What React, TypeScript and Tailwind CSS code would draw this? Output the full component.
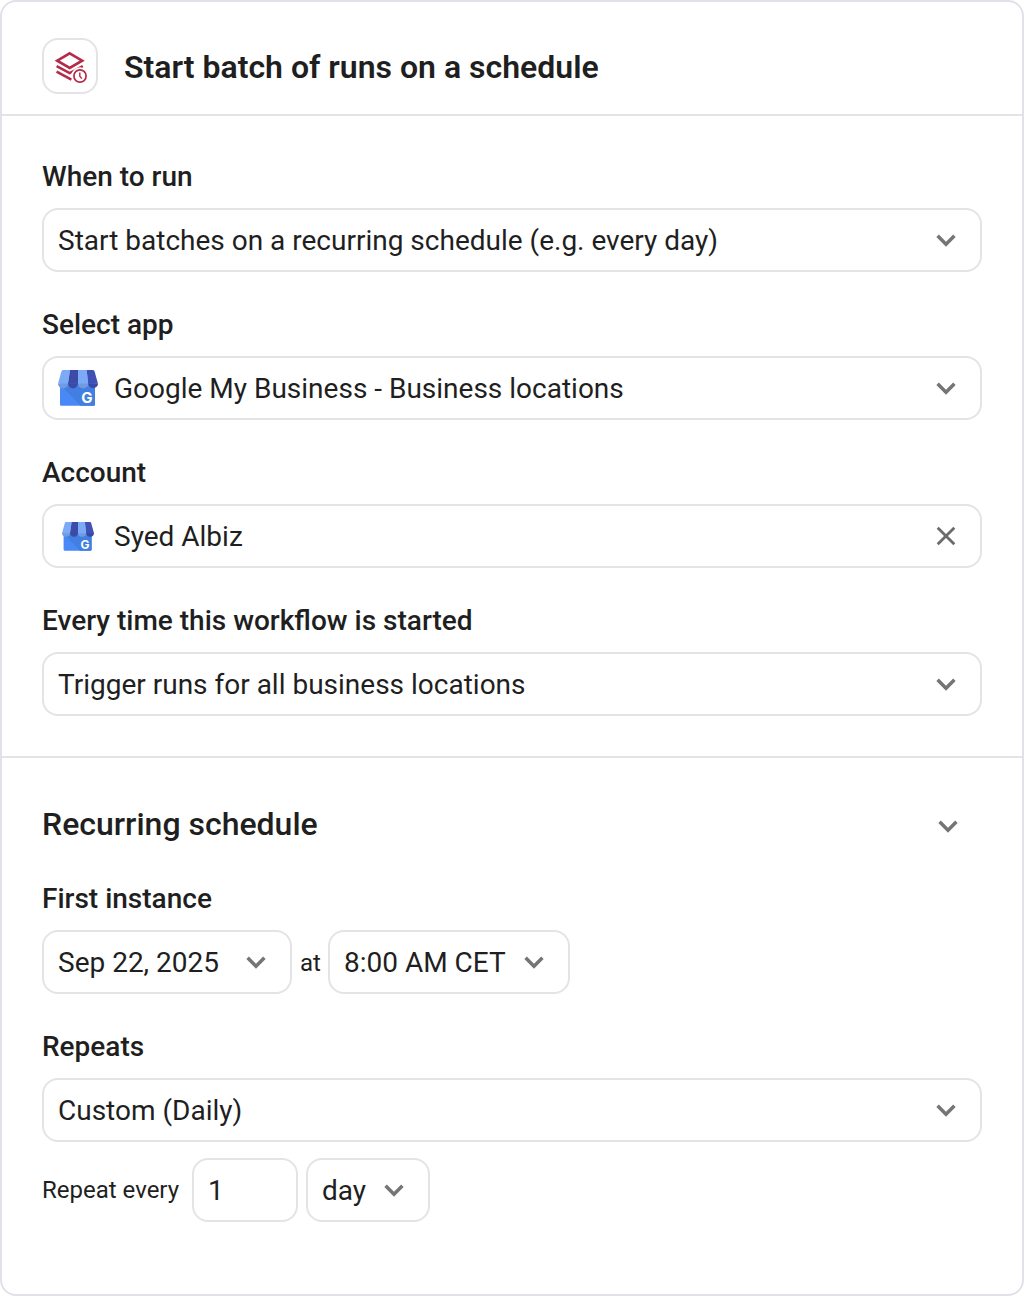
import { useState, type ReactNode } from 'react';

interface SelectBoxProps {
    id: string;
    label?: string;
    options: string[];
    icon?: ReactNode;
    className?: string;
}

function ChevronIcon() {
    return (
        <svg viewBox="0 0 24 24" className="h-6 w-6" fill="none" stroke="#757575" strokeWidth="3.5" aria-hidden="true">
            <path d="M3.6 7.8 12 16.2l8.4-8.4" />
        </svg>
    );
}

function CloseIcon() {
    return (
        <svg viewBox="0 0 24 24" className="h-6 w-6" fill="none" stroke="#6b6b6b" strokeWidth="2.8" aria-hidden="true">
            <path d="M3.7 3.7l16.6 16.6M20.3 3.7 3.7 20.3" />
        </svg>
    );
}

function BatchIcon() {
    return (
        <svg viewBox="0 0 32 32" className="h-8 w-8 overflow-visible" fill="none" stroke="#b42a48" aria-hidden="true">
            <path d="M2.6 21.6 17.4 29.6" strokeWidth="2.6" />
            <path d="M2.6 16.2 15.7 23 28.8 16.2" strokeWidth="2.5" />
            <path d="M15.7 3.3 28.2 10.7 15.7 17.9 3.2 10.7z" fill="#fff" strokeWidth="2.6" />
            <circle cx="26" cy="26" r="8.7" fill="#fff" stroke="none" />
            <circle cx="26" cy="26" r="6.1" strokeWidth="1.7" />
            <path d="M25.8 22.4v3.8l2.1 2.4" strokeWidth="1.4" />
        </svg>
    );
}

function BusinessIcon({ className }: { className: string }) {
    return (
        <svg viewBox="0 0 40 36" className={className} aria-hidden="true">
            <path d="M2 12h35v22.4c0 .8-.6 1.4-1.4 1.4H3.4c-.8 0-1.4-.6-1.4-1.4z" fill="#4989f5" />
            <path d="M4.5 17 22.5 35.8h13.1c.8 0 1.4-.6 1.4-1.4V17z" fill="#427fe0" />
            <path d="M0 13.4h10a5 5 0 0 1-10 0z" fill="#709be0" />
            <path d="M10 13.4h10a5 5 0 0 1-10 0z" fill="#3c4ba6" />
            <path d="M20 13.4h10.2a5 5 0 0 1-10.2 0z" fill="#709be0" />
            <path d="M30.2 13.4H40a4.9 4.9 0 0 1-9.8 0z" fill="#3a49a5" />
            <path d="M5.4 0H12L10 13.8H0L3.4 1.6C3.7.6 4.4 0 5.4 0z" fill="#7baaf7" />
            <path d="M12 0h8v13.8H10z" fill="#3c4aa8" />
            <path d="M20 0h8.6l1.6 13.8H20z" fill="#7baaf7" />
            <path d="M28.6 0h6c1 0 1.7.6 2 1.6L40 13.8h-9.8z" fill="#3f51b5" />
            <text x="23.2" y="33.2" fill="#fff" fontFamily="Inter, sans-serif" fontWeight="700" fontSize="15">
                G
            </text>
        </svg>
    );
}

function FieldLabel({ htmlFor, children }: { htmlFor: string; children: ReactNode }) {
    return (
        <label htmlFor={htmlFor} className="mb-2.5 block text-[28px] leading-[42px] font-medium">
            {children}
        </label>
    );
}

function SelectBox({ id, label, options, icon, className = 'w-full' }: SelectBoxProps) {
    return (
        <div className={`relative ${className}`}>
            {icon && <span className="pointer-events-none absolute inset-y-0 left-4 flex w-10 items-center justify-center">{icon}</span>}
            <select
                id={id}
                aria-label={label}
                className={`h-16 w-full appearance-none rounded-2xl border-2 border-[#e4e4e4] bg-white pt-0.5 pr-14 text-[28px] ${icon ? 'pl-[70px]' : 'pl-3.5'}`}
            >
                {options.map((option) => (
                    <option key={option}>{option}</option>
                ))}
            </select>
            <span className="pointer-events-none absolute inset-y-0 right-6 flex items-center">
                <ChevronIcon />
            </span>
        </div>
    );
}

export default function App() {
    const [account, setAccount] = useState('Syed Albiz');
    const [open, setOpen] = useState(true);

    return (
        <main className="rounded-2xl border-2 border-[#e2e1ea] bg-white font-[Roboto,sans-serif] text-[#1f1f1f]">
            {/* Header */}
            <header className="flex items-center gap-[26px] border-b-2 border-[#e4e4e4] px-10 pt-9 pb-5">
                <div className="flex h-14 w-14 shrink-0 items-center justify-center rounded-2xl border-2 border-[#e4e4e4]">
                    <BatchIcon />
                </div>
                <h1 className="pt-0.5 text-[32px] leading-10 font-semibold">Start batch of runs on a schedule</h1>
            </header>

            {/* Trigger settings */}
            <section className="flex flex-col gap-8 border-b-2 border-[#e4e4e4] p-10">
                <div>
                    <FieldLabel htmlFor="when">When to run</FieldLabel>
                    <SelectBox id="when" options={['Start batches on a recurring schedule (e.g. every day)']} />
                </div>
                <div>
                    <FieldLabel htmlFor="app">Select app</FieldLabel>
                    <SelectBox
                        id="app"
                        options={['Google My Business - Business locations']}
                        icon={<BusinessIcon className="h-9 w-10" />}
                    />
                </div>
                <div>
                    <FieldLabel htmlFor="account">Account</FieldLabel>
                    <div className="flex h-16 items-center rounded-2xl border-2 border-[#e4e4e4] pr-[22px] pl-3.5">
                        <span className="flex w-10 shrink-0 justify-center">
                            <BusinessIcon className="h-[29px] w-8" />
                        </span>
                        <input
                            id="account"
                            type="text"
                            value={account}
                            onChange={(e) => setAccount(e.target.value)}
                            className="min-w-0 flex-1 px-4 pt-0.5 text-[28px] outline-none"
                        />
                        <button type="button" aria-label="Clear account" onClick={() => setAccount('')}>
                            <CloseIcon />
                        </button>
                    </div>
                </div>
                <div>
                    <FieldLabel htmlFor="every">Every time this workflow is started</FieldLabel>
                    <SelectBox id="every" options={['Trigger runs for all business locations']} />
                </div>
            </section>

            {/* Recurring schedule */}
            <section className="px-10 pt-11 pb-[72px]">
                <div className="flex items-center justify-between pr-[22px]">
                    <h2 className="pt-0.5 text-[32px] leading-10 font-medium">Recurring schedule</h2>
                    <button
                        type="button"
                        aria-label="Toggle recurring schedule"
                        aria-expanded={open}
                        onClick={() => setOpen(!open)}
                        className="pt-1.5"
                    >
                        <ChevronIcon />
                    </button>
                </div>

                {open && (
                    <div className="mt-[34px]">
                        <FieldLabel htmlFor="date">First instance</FieldLabel>
                        <div className="flex items-center gap-2">
                            <SelectBox id="date" options={['Sep 22, 2025']} className="w-[250px]" />
                            <span className="w-5 pt-0.5 text-2xl">at</span>
                            <SelectBox id="time" label="Time" options={['8:00 AM CET']} className="w-[242px]" />
                        </div>

                        <div className="mt-8">
                            <FieldLabel htmlFor="repeats">Repeats</FieldLabel>
                            <SelectBox id="repeats" options={['Custom (Daily)']} />
                        </div>

                        <div className="mt-4 flex items-center gap-2">
                            <label htmlFor="interval" className="w-[142px] text-2xl">
                                Repeat every
                            </label>
                            <input
                                id="interval"
                                type="text"
                                defaultValue="1"
                                className="h-16 w-[106px] rounded-2xl border-2 border-[#e4e4e4] px-3.5 text-[28px]"
                            />
                            <SelectBox id="unit" label="Unit" options={['day']} className="w-[124px]" />
                        </div>
                    </div>
                )}
            </section>
        </main>
    );
}
